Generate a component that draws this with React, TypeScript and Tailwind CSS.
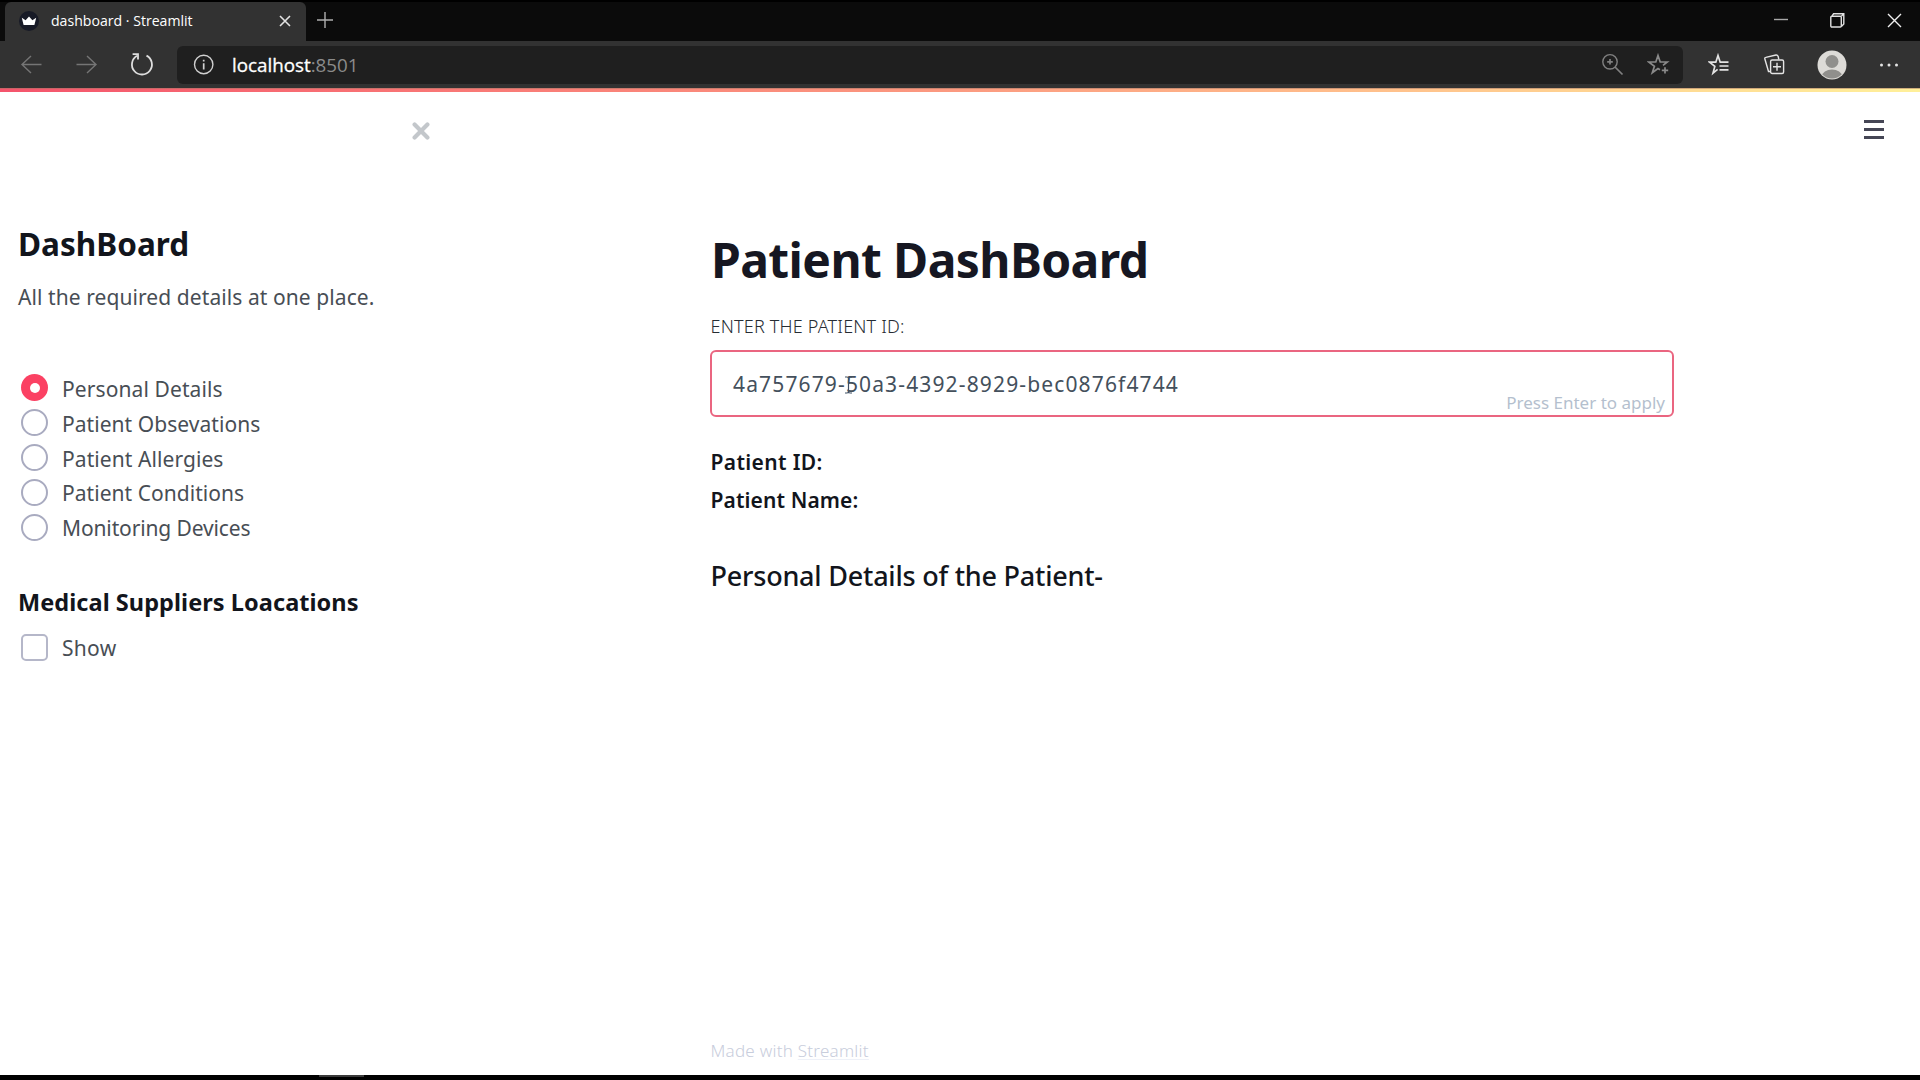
import { ReactNode } from "react";

const options = [
  { label: "Personal Details", spacing: "tracking-[0.1px]", selected: true },
  { label: "Patient Obsevations", spacing: "tracking-[0.05px]" },
  { label: "Patient Allergies", spacing: "tracking-[0.08px]" },
  { label: "Patient Conditions", spacing: "tracking-[0.04px]" },
  { label: "Monitoring Devices", spacing: "tracking-[-0.13px]" },
];

function Icon({ size, className, children }: { size: number; className?: string; children: ReactNode }) {
  return (
    <svg
      width={size}
      height={size}
      viewBox={`0 0 ${size} ${size}`}
      fill="none"
      stroke="currentColor"
      strokeWidth={1.4}
      className={`shrink-0 ${className ?? ""}`}
    >
      {children}
    </svg>
  );
}

function TabStrip() {
  return (
    <div className="flex h-[41px] bg-[#0b0b0b] border-t-2 border-black">
      <div className="flex w-[301px] ml-[5px] shrink-0 items-center rounded-t-md bg-[#323232] pb-[2px] pl-[14px] pr-[13px]">
        <svg width="20" height="20" viewBox="0 0 20 20" className="shrink-0">
          <circle cx="10" cy="10" r="10" fill="#171a26" />
          <path d="M2.8 6.8 L6.6 9.2 L10 5.6 L13.4 9.2 L17.2 6.8 L15.4 14 H4.6 Z" fill="#fff" />
        </svg>
        <span className="ml-3 flex-1 whitespace-nowrap text-[14.1px] text-white">dashboard · Streamlit</span>
        <Icon size={16} className="text-[#e2e2e2]">
          <path d="M3 3 L13 13 M13 3 L3 13" strokeWidth="1.6" />
        </Icon>
      </div>
      <div className="flex flex-1 items-center justify-between pb-[3px] pl-[10px] pr-[17px]">
        <Icon size={18} className="text-[#b0b0b0]">
          <path d="M9 1 V17 M1 9 H17" />
        </Icon>
        <div className="flex items-center gap-[40px]">
          <Icon size={16} className="text-[#a8a8a8]">
            <path d="M1 7.5 H15" />
          </Icon>
          <Icon size={17} className="text-[#e0e0e0]">
            <rect x="1.8" y="4.2" width="10.5" height="10.8" rx="1" />
            <path d="M3 4 L4.6 1.8 H14.8 V12 L12.4 14.4 M12.4 4.2 L14.6 2" />
          </Icon>
          <Icon size={17} className="text-[#f0f0f0]">
            <path d="M2 2 L15 15 M15 2 L2 15" />
          </Icon>
        </div>
      </div>
    </div>
  );
}

function AddressBar() {
  return (
    <div className="flex h-[47px] items-center bg-[#323232]">
      <Icon size={24} className="ml-[19px] text-[#757575]">
        <path d="M22.5 11.5 H3 M12 3 L3 11.5 L12 20" />
      </Icon>
      <Icon size={24} className="ml-[32px] text-[#757575]">
        <path d="M1.5 11.5 H21 M12 3 L21 11.5 L12 20" />
      </Icon>
      <Icon size={26} className="ml-[30px] text-[#dedede]">
        <path d="M17.5 3.6 A10 10 0 1 1 8 3.8" strokeWidth="1.8" />
        <path d="M3.6 2.2 H9 V7.6" strokeWidth="1.8" />
      </Icon>
      <div className="ml-[22px] flex h-[38px] w-[1506px] items-center rounded-md bg-[#1f1f1f] pl-[16px] pr-[12px]">
        <Icon size={22} className="text-[#d0d0d0]">
          <circle cx="10.7" cy="10.5" r="9.2" />
          <path d="M10.7 9.2 V15.5 M10.7 5.8 V7.5" strokeWidth="1.7" />
        </Icon>
        <span className="mt-px ml-[17px] flex-1 whitespace-nowrap text-[18.8px] text-[#8b8b8b]">
          <span className="text-white [-webkit-text-stroke:0.3px_white]">localhost</span>:8501
        </span>
        <Icon size={24} className="text-[#808080]">
          <circle cx="10" cy="8.8" r="7.2" />
          <path d="M15 14 L22.5 21.5 M10 6 V11.6 M7.2 8.8 H12.8" strokeWidth="1.7" />
        </Icon>
        <Icon size={24} className="ml-[23px] text-[#8a8a8a]">
          <path d="M13 16.8 L11 15.6 L5.3 19.8 L7.4 13.2 L1.8 9 H8.8 L11 2.5 L13.2 9 H20.2 L16 12.3 M18 14.2 V20.6 M14.8 17.4 H21.2" strokeWidth="1.7" />
        </Icon>
      </div>
      <Icon size={24} className="ml-[25px] text-[#e4e4e4]">
        <path d="M9.6 16.4 L5 20.2 L6.8 13.4 L1.5 9.2 H7.8 L10 2.5 L12.2 9.2 H20.5 M11.5 13 H20.5 M11.5 16.8 H20.5" strokeWidth="1.7" />
      </Icon>
      <Icon size={24} className="ml-[31px] text-[#e4e4e4]">
        <rect x="7.6" y="7" width="13" height="13.5" rx="1.5" />
        <path d="M14 9.8 V17.8 M10 13.8 H18 M7 18.5 H5.5 L1.8 5.8 Q1.6 4.6 2.8 4.4 L13 2 Q14.5 1.8 15.2 3.5 L15.8 6.5" />
      </Icon>
      <svg width="30" height="30" viewBox="0 0 30 30" className="ml-[30px] shrink-0">
        <clipPath id="avatar">
          <circle cx="15" cy="15" r="13.6" />
        </clipPath>
        <circle cx="15" cy="15" r="14.5" fill="#dddbd7" />
        <g clipPath="url(#avatar)" fill="#908f8c">
          <circle cx="15" cy="11.5" r="6.5" />
          <ellipse cx="15" cy="26" rx="10" ry="6.5" />
        </g>
      </svg>
      <svg width="20" height="4" viewBox="0 0 20 4" className="ml-[32px] shrink-0" fill="#e4e4e4">
        <circle cx="2.5" cy="2" r="1.5" />
        <circle cx="10" cy="2" r="1.5" />
        <circle cx="17.5" cy="2" r="1.5" />
      </svg>
    </div>
  );
}

function Sidebar() {
  return (
    <aside className="flex w-[450px] shrink-0 flex-col pl-[18px] pr-5 text-[21px] text-[#484e55]">
      <div className="flex h-[77px] items-center justify-end">
        <svg width="18" height="18" viewBox="0 0 18 18" stroke="#c3c7cb" strokeWidth="4.2" strokeLinecap="round">
          <path d="M2.6 2.6 L15.4 15.4 M15.4 2.6 L2.6 15.4" />
        </svg>
      </div>
      <h2 className="mt-[55px] h-10 text-[31.5px] leading-10 font-bold tracking-[0.02px] text-[#12151c]">DashBoard</h2>
      <p className="mt-[17px] leading-8 tracking-[0.08px] whitespace-nowrap">All the required details at one place.</p>
      <div className="mt-[57.5px]">
        {options.map((o) => (
          <label key={o.label} className="flex h-[34.85px] items-center pl-[3px]">
            <span
              className={
                o.selected
                  ? "flex size-[27px] items-center justify-center rounded-full bg-[#fb4163]"
                  : "flex size-[27px] rounded-full border-2 border-[#a9abc0]"
              }
            >
              {o.selected && <span className="size-[10px] rounded-full bg-white" />}
            </span>
            <span className={`mt-[2px] ml-[14px] leading-[32px] whitespace-nowrap ${o.spacing}`}>{o.label}</span>
          </label>
        ))}
      </div>
      <h3 className="mt-[39px] text-[23.5px] leading-9 font-bold tracking-[0.06px] whitespace-nowrap text-[#12151c]">Medical Suppliers Loacations</h3>
      <label className="mt-[10px] flex h-[35px] items-center pl-[3px]">
        <span className="size-[27px] rounded-[5px] border-2 border-[#b5b7c9]" />
        <span className="mt-px ml-[14px] leading-8 tracking-[0.3px]">Show</span>
      </label>
    </aside>
  );
}

function Main() {
  return (
    <main className="ml-[260px] flex w-[964px] flex-col text-[#12151c]">
      <h1 className="mt-[138px] ml-px h-[60px] text-[48px] leading-[60px] font-bold tracking-[-0.6px] text-[#161722]">Patient DashBoard</h1>
      <label className="mt-[22px] ml-[0.5px] text-[18px] leading-7 font-light tracking-[0.2px] text-[#262c33]">ENTER THE PATIENT ID:</label>
      <div className="relative mt-[10px] flex h-[67px] items-center rounded-md border-2 border-[#ea6580] pl-[21px]">
        <span className="mt-[2px] tracking-[1.14px] text-[#44505c]">4a757679-50a3-4392-8929-bec0876f4744</span>
        <svg width="9" height="18" viewBox="0 0 9 18" className="absolute top-[24px] left-[132px]" fill="none" stroke="#3f5064" strokeWidth="1.2">
          <path d="M1 1 H3 Q4.5 1 4.5 2.5 V15.5 Q4.5 17 3 17 H1 M8 1 H6 Q4.5 1 4.5 2.5 M4.5 15.5 Q4.5 17 6 17 H8" />
        </svg>
        <span className="absolute right-[7px] bottom-0 text-[17px] leading-6 text-[#b4bfce]">Press Enter to apply</span>
      </div>
      <div className="mt-[26px] ml-[0.5px] leading-[38px] font-semibold">
        <p className="tracking-[0.35px]">Patient ID:</p>
        <p className="tracking-[0.1px]">Patient Name:</p>
      </div>
      <h3 className="mt-[37px] ml-[0.5px] text-[27px] leading-10 font-medium tracking-[-0.22px]">Personal Details of the Patient-</h3>
      <footer className="mt-auto mb-[12px] ml-[0.5px] text-[17px] leading-6 font-light tracking-[0.25px] text-[#c8cddc]">
        Made with <span className="underline decoration-[#eef1f8] decoration-1 underline-offset-2">Streamlit</span>
      </footer>
    </main>
  );
}

export default function App() {
  return (
    <div className="flex h-[1080px] w-[1920px] flex-col overflow-hidden bg-white">
      <header className="font-['Open_Sans',sans-serif]">
        <TabStrip />
        <AddressBar />
        <div className="h-[4px] border-t border-[#a0705f]/50 bg-linear-to-r from-[#f4546c] via-[#fb9a80] to-[#fff09a]" />
      </header>
      <div className="flex min-h-0 flex-1 bg-white font-['Noto_Sans',sans-serif] text-[21px]">
        <Sidebar />
        <Main />
        <button className="mt-[28px] ml-[190px] flex h-[19px] w-5 flex-col justify-between self-start" aria-label="Menu">
          <span className="h-[3px] w-full bg-[#454655]" />
          <span className="h-[3px] w-full bg-[#454655]" />
          <span className="h-[3px] w-full bg-[#454655]" />
        </button>
      </div>
      <div className="h-[5px] bg-black pl-[319px]">
        <div className="h-[2px] w-[45px] bg-[#3a3a3a]" />
      </div>
    </div>
  );
}
